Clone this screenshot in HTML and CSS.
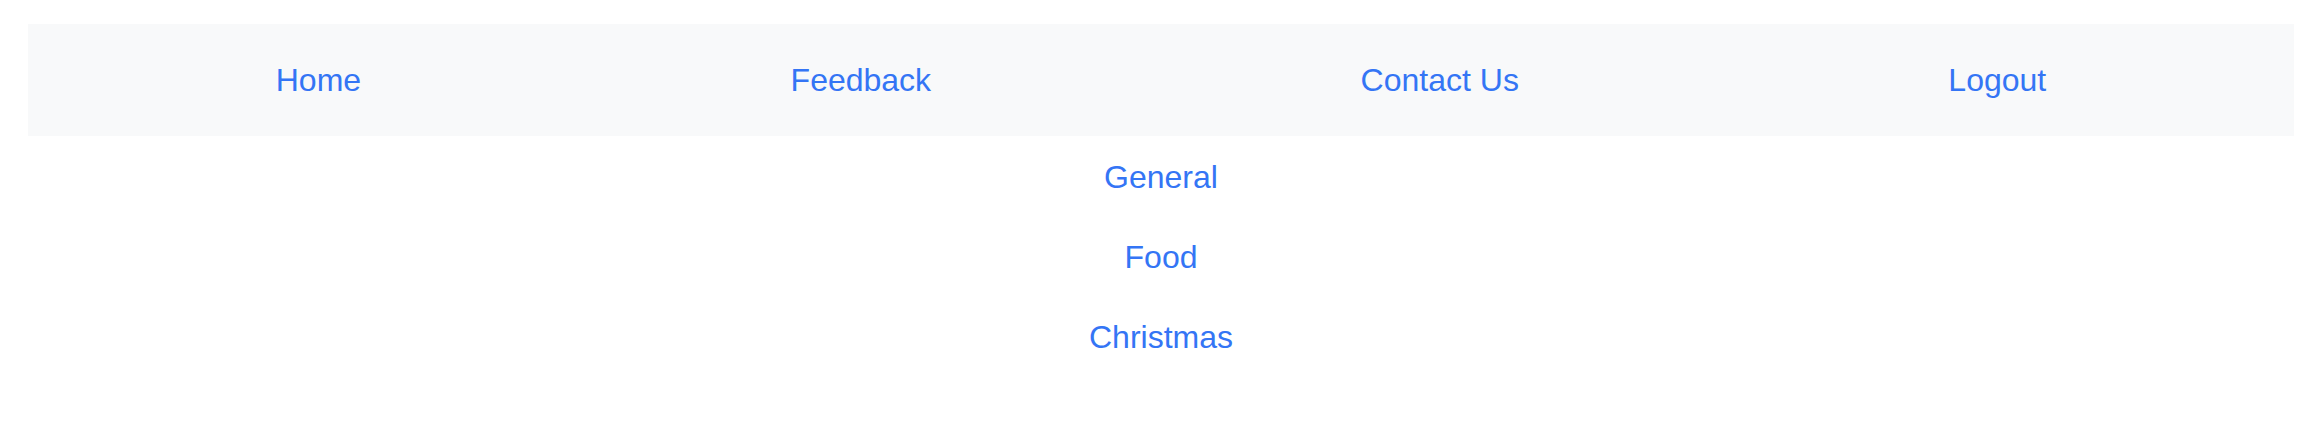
FILE: index.html
```html
<!DOCTYPE html>
<html lang="en">
<head>
<meta charset="utf-8">
<title>Menu</title>
<link rel="stylesheet" href="styles.css">
</head>
<body>
<div class="page">
  <nav class="navbar">
    <a class="nav-link" href="#">Home</a>
    <a class="nav-link" href="#">Feedback</a>
    <a class="nav-link" href="#">Contact Us</a>
    <a class="nav-link" href="#">Logout</a>
  </nav>
  <ul class="categories">
    <li><a class="cat-link" href="#">General</a></li>
    <li><a class="cat-link" href="#">Food</a></li>
    <li><a class="cat-link" href="#">Christmas</a></li>
  </ul>
</div>
</body>
</html>
```

FILE: styles.css
```css
html, body {
  margin: 0;
  padding: 0;
  background: #ffffff;
}

body {
  font-family: "Liberation Sans", Arial, sans-serif;
  font-size: 32px;
  line-height: 48px;
}

.page {
  padding: 24px 26px 0 28px;
}

.navbar {
  display: flex;
  justify-content: space-around;
  align-items: center;
  padding: 32px 33px;
  background: #f8f9fa;
}

.nav-link,
.cat-link {
  color: #3475f5;
  text-decoration: none;
}

.categories {
  list-style: none;
  margin: 0;
  padding: 17px 0 0;
  display: flex;
  flex-direction: column;
  align-items: center;
  gap: 32px;
}
```
